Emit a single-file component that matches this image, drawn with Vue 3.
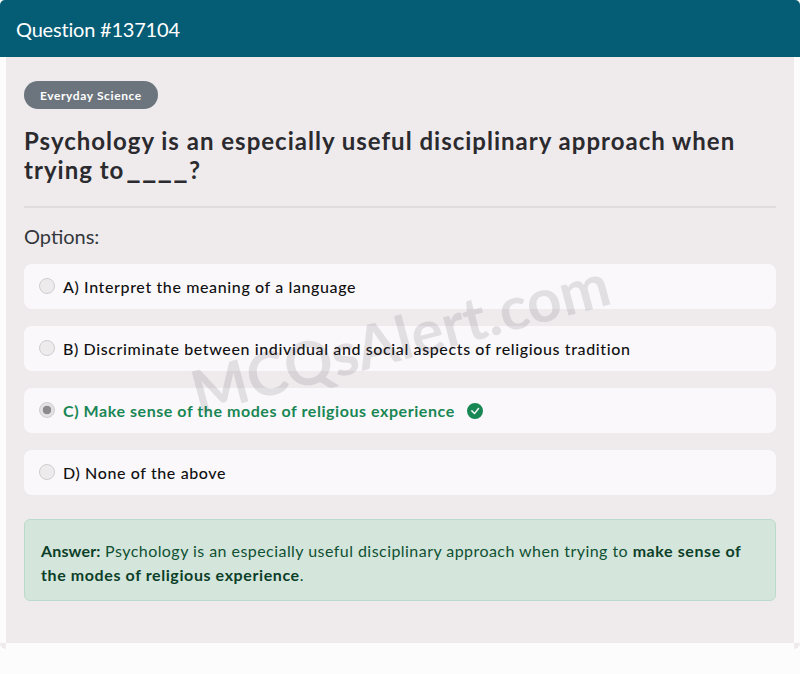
<template>
  <div class="page">
    <div class="card">
      <div class="card-header">Question #137104</div>
      <div class="card-body">
        <span class="badge">Everyday Science</span>
        <h1 class="title">Psychology is an especially useful disciplinary approach when trying to<span class="blank">____</span>?</h1>
        <hr class="divider" />
        <div class="options-label">Options:</div>
        <div class="options">
          <label v-for="opt in options" :key="opt.text" class="option" :class="{ correct: opt.correct }">
            <span class="radio" :class="{ checked: opt.correct }"></span>
            <span class="option-text">{{ opt.text }}</span>
            <svg v-if="opt.correct" class="check" viewBox="0 0 16 16" width="16" height="16">
              <path fill="#198754" d="M16 8A8 8 0 1 1 0 8a8 8 0 0 1 16 0zm-3.97-3.03a.75.75 0 0 0-1.08.02L7.477 9.417 5.384 7.323a.75.75 0 0 0-1.06 1.06L6.97 11.03a.75.75 0 0 0 1.079-.02l3.992-4.99a.75.75 0 0 0-.01-1.05z" />
            </svg>
          </label>
        </div>
        <div class="alert">
          <strong class="label">Answer:</strong> Psychology is an especially useful disciplinary approach when trying to
          <strong>make sense of the modes of religious experience</strong>.
        </div>
      </div>
    </div>
    <div class="footer">
      <span class="corner left"></span>
      <span class="corner right"></span>
    </div>
    <div class="watermark">MCQsAlert.com</div>
  </div>
</template>

<script setup>
const options = [
  { text: 'A) Interpret the meaning of a language' },
  { text: 'B) Discriminate between individual and social aspects of religious tradition' },
  { text: 'C) Make sense of the modes of religious experience', correct: true },
  { text: 'D) None of the above' }
]
</script>

<style>
html, body {
  margin: 0;
  background: #fcfcfc;
}
</style>

<style scoped>
.page {
  position: relative;
  width: 800px;
  height: 674px;
  overflow: hidden;
  background: #fcfcfc;
  font-family: "Lato", "Open Sans", sans-serif;
  color: #212529;
}
.card {
  display: flex;
  flex-direction: column;
  height: 643px;
}
.card-header {
  height: 57px;
  box-sizing: border-box;
  padding: 0 16px;
  display: flex;
  align-items: center;
  background: #055c75;
  color: #fff;
  font-size: 20px;
  letter-spacing: -0.2px;
  border-radius: 5px 5px 0 0;
}
.card-body {
  flex: 1;
  margin: 0 6px;
  padding: 24px 18px 0;
  background: #efebed;
}
.badge {
  display: inline-block;
  height: 28px;
  line-height: 29px;
  padding: 0 16px;
  border-radius: 14px;
  background: #6c757d;
  color: #fff;
  font-size: 12px;
  font-weight: 700;
  letter-spacing: 0.6px;
}
.title {
  margin: 17px 0 0;
  font-size: 24px;
  line-height: 29px;
  font-weight: 700;
  color: #2b2a2e;
  letter-spacing: 1px;
}
.blank {
  margin-left: 2px;
  font-size: 31px;
  line-height: 0;
  letter-spacing: 1.2px;
  vertical-align: 1px;
}
.divider {
  height: 2px;
  margin: 22px 0 0;
  border: 0;
  background: #dfdcdd;
}
.options-label {
  margin-top: 14px;
  font-size: 20px;
  line-height: 28px;
  font-weight: 400;
  color: #33373b;
}
.options {
  margin-top: 14px;
  display: flex;
  flex-direction: column;
  gap: 17px;
}
.option {
  height: 45px;
  box-sizing: border-box;
  padding: 0 15px;
  display: flex;
  align-items: center;
  border-radius: 8px;
  background: #fbf8fc;
  color: #111;
  font-size: 16px;
  font-weight: 500;
  letter-spacing: 0.62px;
}
.option.correct {
  color: #198754;
  font-weight: 700;
  letter-spacing: 0.56px;
}
.radio {
  flex: none;
  box-sizing: border-box;
  width: 16px;
  height: 16px;
  margin-right: 8px;
  margin-top: -1px;
  border-radius: 50%;
  border: 1px solid #cfcdd0;
  background: #eeebec;
}
.radio.checked {
  background: radial-gradient(circle, #8b8a8d 0 4px, #e3e1e3 4.6px);
}
.check {
  margin-left: 12px;
}
.alert {
  margin-top: 24px;
  height: 82px;
  box-sizing: border-box;
  padding: 19px 16px;
  border: 1px solid #badbcc;
  border-radius: 6px;
  background: #d4e5dc;
  color: #0f5132;
  font-size: 16px;
  line-height: 24px;
  letter-spacing: 0.45px;
}
.alert strong {
  font-weight: 700;
  color: #0c3f28;
  letter-spacing: 0.6px;
}
.alert strong.label {
  letter-spacing: 0.15px;
}
.footer {
  height: 31px;
  display: flex;
  justify-content: space-between;
  align-items: flex-start;
}
.corner {
  width: 6px;
  height: 6px;
  background: #efebed;
}
.corner.left {
  border-bottom-left-radius: 6px;
}
.corner.right {
  border-bottom-right-radius: 6px;
}
.watermark {
  position: absolute;
  left: 400px;
  top: 337px;
  transform: translate(-50%, -50%) rotate(-15deg);
  font-size: 60px;
  font-weight: 700;
  color: rgba(80, 70, 75, 0.14);
  white-space: nowrap;
  pointer-events: none;
}
</style>
